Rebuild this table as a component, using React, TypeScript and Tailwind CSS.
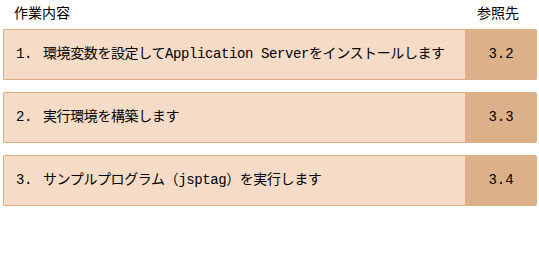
const rows = [
  { no: "1.", text: "環境変数を設定してApplication Serverをインストールします", ref: "3.2" },
  { no: "2.", text: "実行環境を構築します", ref: "3.3" },
  { no: "3.", text: "サンプルプログラム（jsptag）を実行します", ref: "3.4" },
];

const fontStack = "font-['Liberation_Mono','Noto_Sans_CJK_JP',monospace]";

export default function App() {
  return (
    <div className={`min-h-[273px] w-[539px] bg-white pl-[3px] pr-[2px] pt-[3px] text-[14px] text-black ${fontStack}`}>
      <div className="flex h-[22px] items-center">
        <div className="flex-1 pl-[11px]">作業内容</div>
        <div className="w-[72px] pr-[6px] text-center">参照先</div>
      </div>
      <div className="mt-[4px] flex flex-col gap-[12px]">
        {rows.map((row) => (
          <div
            key={row.ref}
            className="flex h-[51px] overflow-hidden rounded-[2px] border border-r-0 border-[#dcae86] bg-[#f6dcc6]"
          >
            <div className="flex flex-1 items-center pl-[12px] tracking-[-0.4px]">
              <span className="w-[27px]">{row.no}</span>
              <span>{row.text}</span>
            </div>
            <div className="flex w-[72px] items-center justify-center bg-[#dcb089]">
              {row.ref}
            </div>
          </div>
        ))}
      </div>
    </div>
  );
}
